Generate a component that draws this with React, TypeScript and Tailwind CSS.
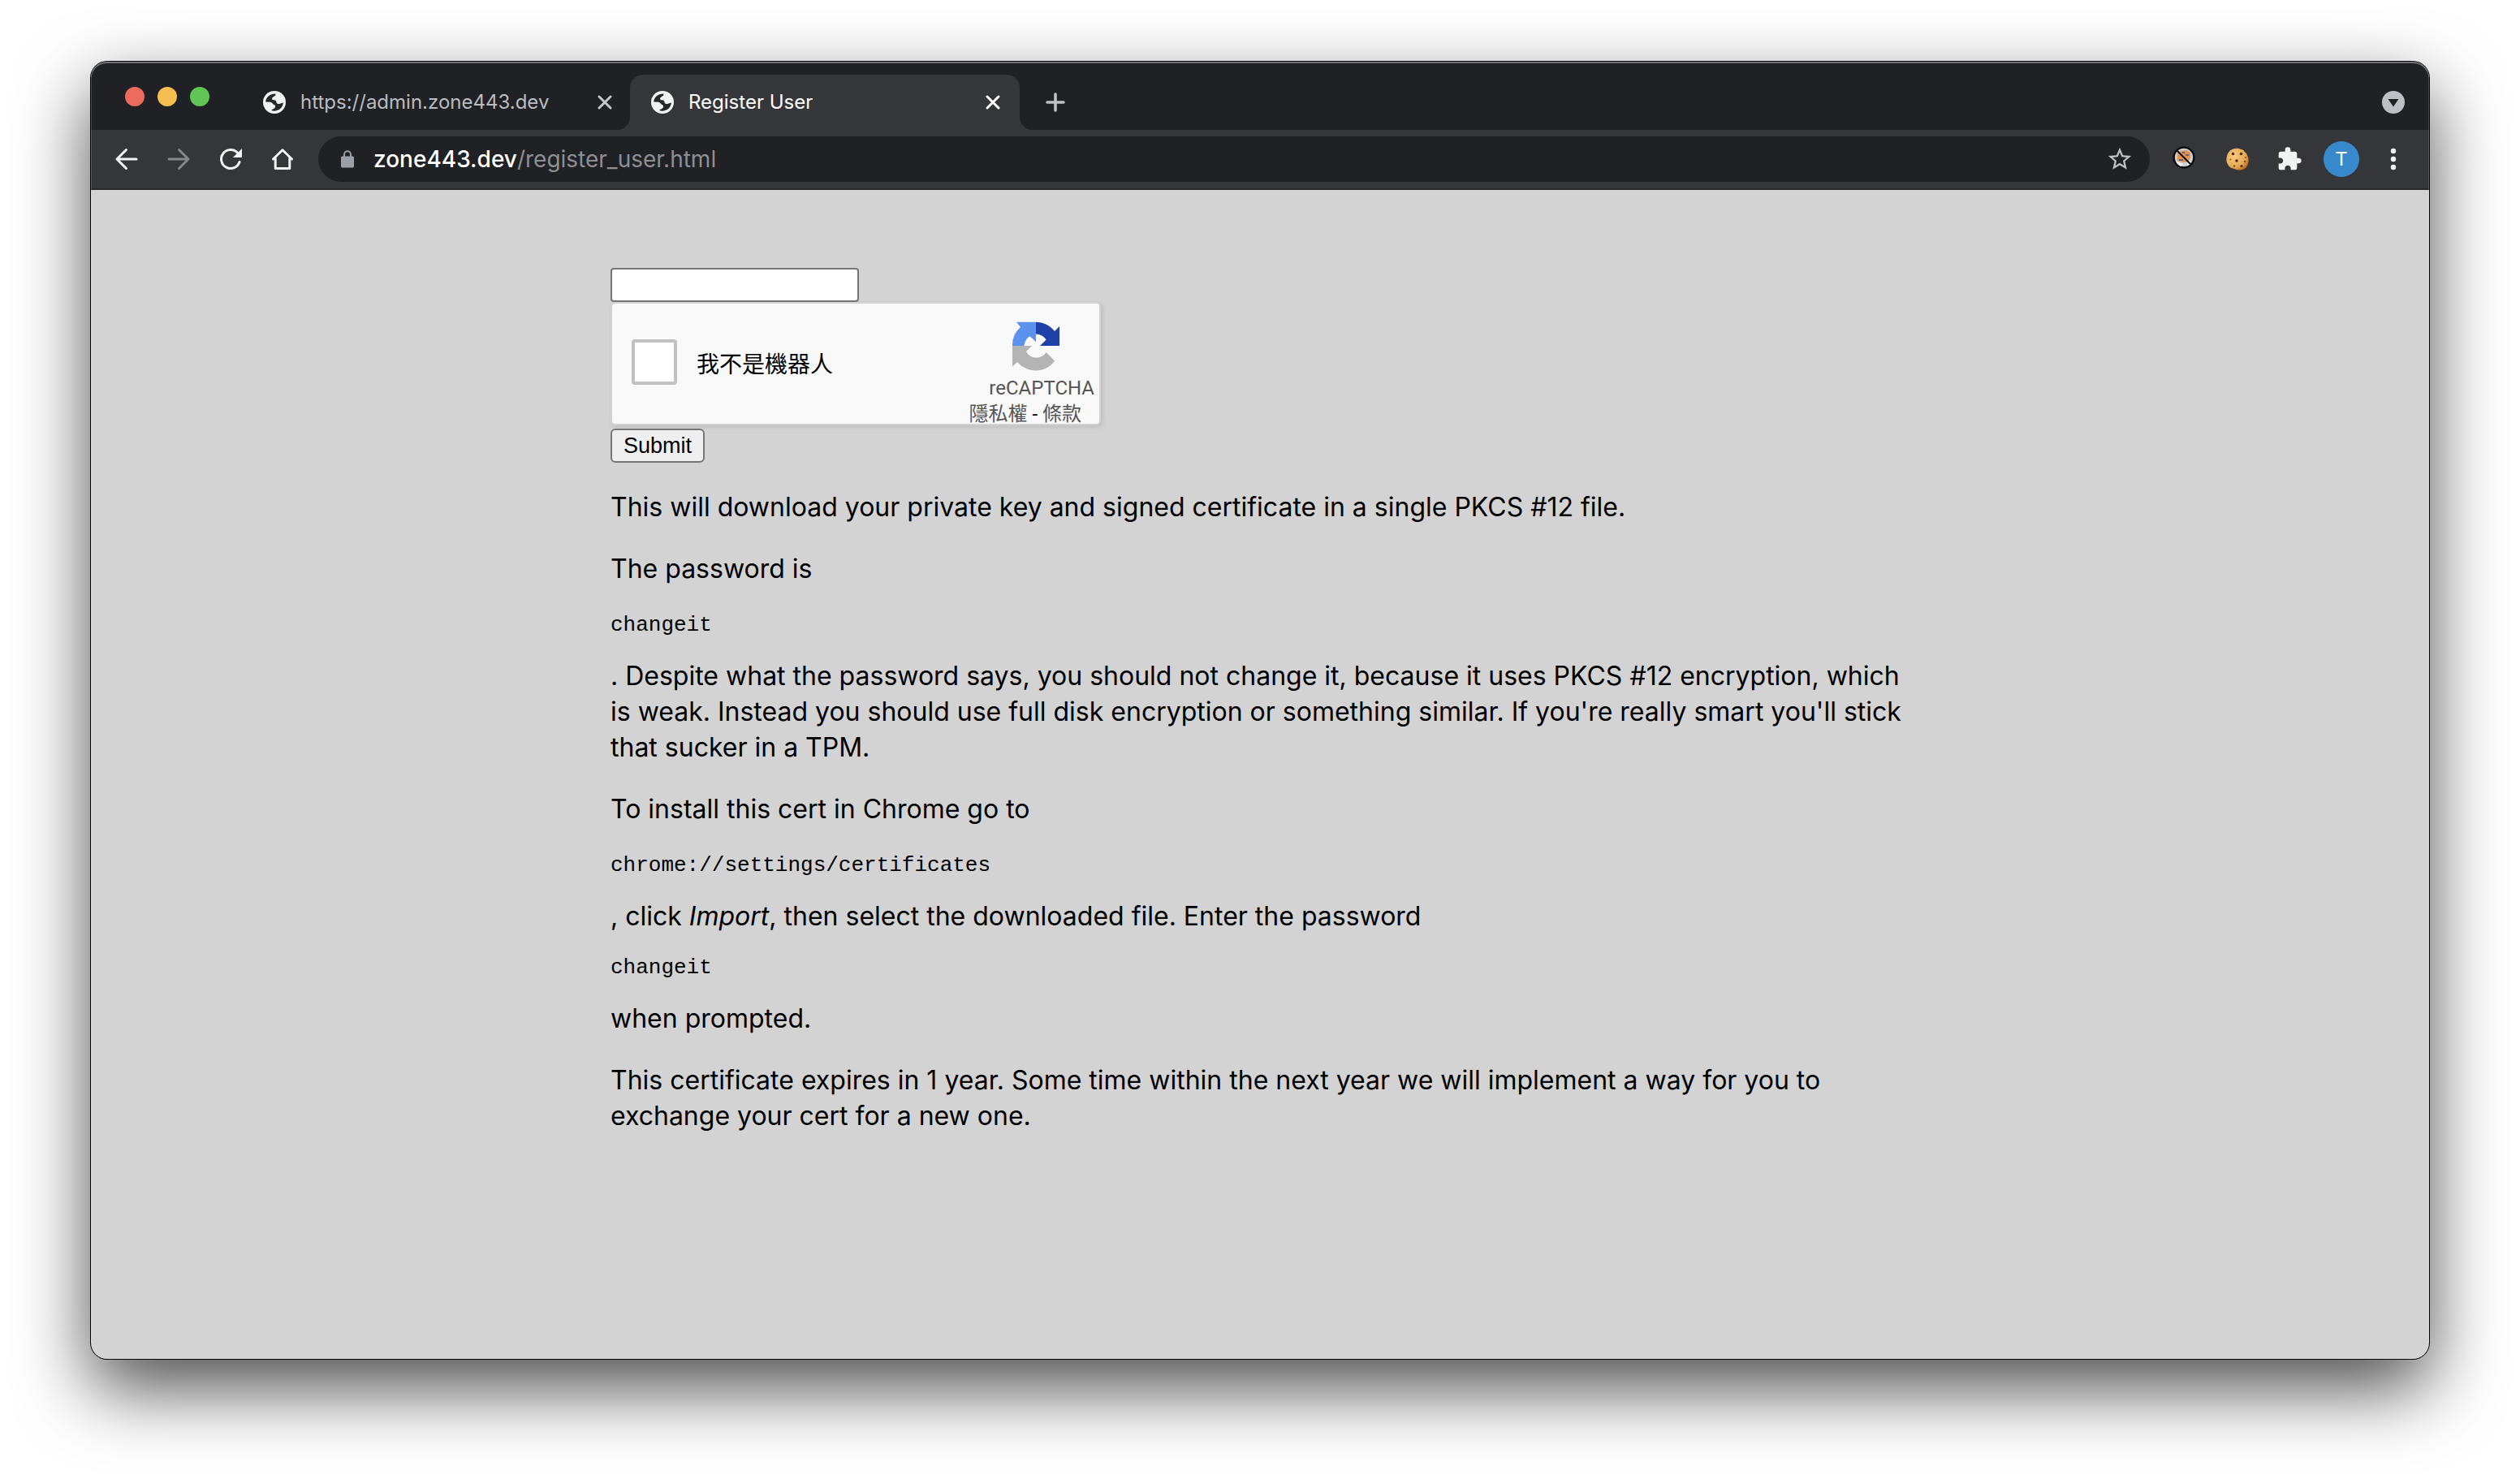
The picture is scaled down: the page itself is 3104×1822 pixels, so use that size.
import type { ReactNode } from "react";
import { MdExtension, MdStarBorder } from "react-icons/md";

function GlobeIcon() {
  return (
    <svg viewBox="0 0 28 28" className="size-7 shrink-0" aria-hidden="true">
      <circle cx="14" cy="14" r="14" fill="#f1f3f4" />
      <path
        d="M3.2 13.6C3.4 7.8 8 3.4 15.4 3.4L15.2 6C13.4 6.2 13.4 7.4 11.6 8.2C10.4 9.2 11.2 11.4 12.8 11.3C14.8 11 16 11.8 16.4 13.4C16.8 15.4 18.2 16.4 20.4 16C22 15.8 22.8 14.6 24.9 14.6C24.4 20.4 20 24.8 13 24.7L10.4 24C10.6 22.4 13.6 22.6 14.6 20.8C15.6 18.8 15.2 17.6 13.4 17C11.6 16.4 11.6 14.4 9.4 13.8Z"
        fill="#27282b"
      />
    </svg>
  );
}

function CloseIcon({ color }: { color: string }) {
  return (
    <svg viewBox="0 0 18 18" className="size-[18px]" fill="none" stroke={color} strokeWidth="3" strokeLinecap="round" aria-hidden="true">
      <path d="M2 2L16 16M16 2L2 16" />
    </svg>
  );
}

function Tab({ title, active = false }: { title: string; active?: boolean }) {
  return (
    <div
      role="tab"
      aria-selected={active}
      className={
        active
          ? "relative flex h-[68px] w-[480px] items-center gap-[18px] rounded-t-2xl bg-[#35363a] pr-6 pl-[26px] text-white"
          : "relative flex h-[68px] w-[480px] items-center gap-[18px] pr-[22px] pl-7 text-[#b9bcc1]"
      }
    >
      {active && (
        <>
          <span className="absolute bottom-0 -left-4 size-4 bg-[radial-gradient(circle_at_0_0,#202124_16px,#35363a_16px)]" />
          <span className="absolute -right-4 bottom-0 size-4 bg-[radial-gradient(circle_at_100%_0,#202124_16px,#35363a_16px)]" />
        </>
      )}
      <GlobeIcon />
      <span className="flex-1 truncate text-[24px] leading-8">{title}</span>
      <button type="button" aria-label={`Close ${title}`}>
        <CloseIcon color={active ? "#ffffff" : "#c4c7cb"} />
      </button>
    </div>
  );
}

function ToolButton({ label, children }: { label: string; children: ReactNode }) {
  return (
    <button type="button" aria-label={label} className="flex h-14 w-16 items-center justify-center">
      {children}
    </button>
  );
}

function ArrowIcon({ color, forward = false }: { color: string; forward?: boolean }) {
  return (
    <svg viewBox="0 0 28 28" className="size-7" fill="none" stroke={color} strokeWidth="3" strokeLinecap="round" strokeLinejoin="round" aria-hidden="true">
      <path d={forward ? "M2 14H25M14.5 2.5L26 14L14.5 25.5" : "M26 14H3M13.5 2.5L2 14L13.5 25.5"} />
    </svg>
  );
}

function BlockerIcon() {
  return (
    <svg viewBox="0 0 28 28" className="mr-1 mb-1 size-7" aria-hidden="true">
      <circle cx="14" cy="14" r="12.4" fill="#c9ccd3" stroke="#0b0b0c" strokeWidth="2.4" />
      <path d="M6 9L10 6L18 5L22 8L22 14L19 19L13 20L6 18Z" fill="#e8924a" />
      <path d="M4 18L8 20L13 22L10 25L6 22Z" fill="#f6f7f9" />
      <path d="M19 19L23 17L21 22L18 24Z" fill="#f6f7f9" />
      <path d="M8 17h5M16 11h4M12 8h3" stroke="#59667e" strokeWidth="2" />
      <path d="M5.5 5.5L22.5 22.5" stroke="#0b0b0c" strokeWidth="2" />
    </svg>
  );
}

function CookieIcon() {
  return (
    <svg viewBox="0 0 28 28" className="size-7" aria-hidden="true">
      <defs>
        <radialGradient id="cookie" cx="0.35" cy="0.35" r="0.75">
          <stop offset="0" stopColor="#f5cb7c" />
          <stop offset="0.7" stopColor="#e5a750" />
          <stop offset="1" stopColor="#b5641f" />
        </radialGradient>
      </defs>
      <path
        d="M13 .8C15 .2 17 1.4 19 2C21 2.400 22 4 23.5 5.5C25.5 7 25.8 9 26.8 11C28 13 27.6 16 27.4 18C27.2 20 26.6 22 25 24C23 26.5 21 27 18 27.4C15.5 27.6 13 27.2 11.5 26.5C9 26 7.5 25 5.5 24.5C3.5 23 2.2 21 1 18.5C.2 16 .2 13.5 .8 11C1.4 8 3 5.5 5 3.6C7.5 1.6 10 .9 13 .8Z"
        fill="url(#cookie)"
      />
      <g fill="#5b2c10">
        <circle cx="8.5" cy="7.5" r="1.8" />
        <circle cx="18.5" cy="7.5" r="1.8" />
        <circle cx="13" cy="16" r="1.8" />
        <circle cx="19" cy="22.5" r="1.5" />
        <g opacity="0.7">
          <circle cx="5.5" cy="14.5" r="1" />
          <circle cx="23" cy="17" r="1.3" />
          <circle cx="10" cy="22.5" r="1.2" />
          <circle cx="24" cy="12" r="1" />
        </g>
      </g>
    </svg>
  );
}

function RecaptchaLogo() {
  return (
    <svg viewBox="0 0 60 62" className="h-[62px] w-[60px]" aria-hidden="true">
      <path d="M30 .8H6L11 7A29.5 29.5 0 0 0 1 30H15.5C16 25 18.5 20.5 22.5 18.2L30 25.2Z" fill="#5a92ee" />
      <path d="M30 .8C39 .8 47.5 5 53 12L59 6V30H35L42.6 22.6C40 18.4 35.5 15.6 30 15.5Z" fill="#1f41a8" />
      <path d="M1 30H25L18 37C20.5 42 25 44.6 30 44.6C35.5 44.6 40 42.5 42.6 38L53 48.4C47.5 56.5 39 60.4 30 60.4C21 60.4 13 56.5 7 50L1 55.5Z" fill="#b4b4b5" />
    </svg>
  );
}

function Code({ children }: { children: ReactNode }) {
  return <pre className="font-['Liberation_Mono',monospace] text-[26px] leading-[30px]">{children}</pre>;
}

export default function App() {
  return (
    <div className="flex min-h-screen flex-col bg-white px-28 pt-19 pb-37 font-['Inter','Noto_Sans_CJK_TC',sans-serif]">
      <div className="relative flex flex-1 flex-col overflow-hidden rounded-[20px] bg-[#d3d3d3] shadow-[0_0_0_1px_#000,0_36px_90px_rgba(0,0,0,0.7)]">
        <header>
          <div className="flex h-21 items-end bg-[#202124] pl-[42px]">
            <div className="mr-[38px] flex h-[66px] gap-4 pt-[13px]">
              <button type="button" aria-label="Close window" className="size-6 rounded-full bg-[#ed6a5f]" />
              <button type="button" aria-label="Minimize window" className="size-6 rounded-full bg-[#f6be50]" />
              <button type="button" aria-label="Zoom window" className="size-6 rounded-full bg-[#61c555]" />
            </div>
            <div role="tablist" className="flex">
              <Tab title="https://admin.zone443.dev" />
              <Tab title="Register User" active />
            </div>
            <button type="button" aria-label="New tab" className="ml-8 flex h-[68px] items-center">
              <svg viewBox="0 0 24 24" className="size-6" stroke="#bdc1c6" strokeWidth="3.6" strokeLinecap="round" aria-hidden="true">
                <path d="M12 2V22M2 12H22" />
              </svg>
            </button>
            <button type="button" aria-label="Search tabs" className="mr-[30px] ml-auto flex h-[68px] items-center">
              <svg viewBox="0 0 28 28" className="size-7" aria-hidden="true">
                <circle cx="14" cy="14" r="14" fill="#bdc1c6" />
                <path d="M7.5 10H20.5L14 19.5Z" fill="#202124" />
              </svg>
            </button>
          </div>
          <div className="flex h-[74px] items-center border-b-2 border-[#29292c] bg-[#35363a] px-3">
            <ToolButton label="Back">
              <ArrowIcon color="#f1f3f4" />
            </ToolButton>
            <ToolButton label="Forward">
              <ArrowIcon color="#86878a" forward />
            </ToolButton>
            <ToolButton label="Reload">
              <svg viewBox="0 0 28 28" className="size-7" aria-hidden="true">
                <path d="M22.5 6.2A11.5 11.5 0 1 0 25 17.5" fill="none" stroke="#f1f3f4" strokeWidth="3" strokeLinecap="round" />
                <path d="M28 1V12H17Z" fill="#f1f3f4" />
              </svg>
            </ToolButton>
            <ToolButton label="Home">
              <svg viewBox="0 0 28 28" className="size-7" fill="none" stroke="#f1f3f4" strokeWidth="3" strokeLinecap="round" strokeLinejoin="round" aria-hidden="true">
                <path d="M2.5 14L14 2.8L25.5 14M5.2 12.5V25.5H22.8V12.5" />
              </svg>
            </ToolButton>
            <div className="mx-3 flex h-14 flex-1 items-center rounded-full bg-[#202124] pr-5 pl-7">
              <svg viewBox="0 0 16 22" className="mr-6 h-[22px] w-4" aria-hidden="true">
                <rect y="7.5" width="16" height="14" rx="1.5" fill="#9aa0a6" />
                <path d="M4 8.5V5.2A4 4 0 0 1 12 5.2V8.5" fill="none" stroke="#9aa0a6" strokeWidth="2" />
              </svg>
              <div role="textbox" aria-label="Address" tabIndex={0} className="flex-1 text-[28px] leading-9 text-[#8d8f93]">
                <span className="font-medium text-white">zone443.dev</span>/register_user.html
              </div>
              <button type="button" aria-label="Bookmark this page">
                <MdStarBorder className="size-[34px] text-[#bdc1c6]" />
              </button>
            </div>
            <ToolButton label="Script blocker">
              <BlockerIcon />
            </ToolButton>
            <ToolButton label="Cookie editor">
              <CookieIcon />
            </ToolButton>
            <ToolButton label="Extensions">
              <MdExtension className="size-8 text-[#f1f3f4]" />
            </ToolButton>
            <ToolButton label="Profile">
              <span className="flex size-11 items-center justify-center rounded-full bg-[#3888cc] font-['Roboto',sans-serif] text-[24px] leading-8 text-white">
                T
              </span>
            </ToolButton>
            <ToolButton label="Menu">
              <svg viewBox="0 0 8 28" className="h-7 w-2" fill="#f1f3f4" aria-hidden="true">
                <circle cx="4" cy="4" r="3.2" />
                <circle cx="4" cy="14" r="3.2" />
                <circle cx="4" cy="24" r="3.2" />
              </svg>
            </ToolButton>
          </div>
        </header>

        <main className="mx-auto w-full max-w-[1600px] flex-1 pt-24 text-[32px] leading-[44px] text-black">
          <form onSubmit={(e) => e.preventDefault()} className="flex flex-col items-start">
            <input
              type="text"
              aria-label="User name"
              className="h-[42px] w-[306px] rounded-[4px] border-2 border-[#767676] bg-white px-1 font-['Liberation_Sans',sans-serif] text-[26px]"
            />
            <div className="mb-1 flex h-[152px] w-[604px] items-center rounded-[6px] border-2 border-[#d3d3d3] bg-[#f9f9f9] pl-6 font-['Roboto','Noto_Sans_CJK_TC',sans-serif] shadow-[2px_2px_4px_1px_rgba(0,0,0,0.08)]">
              <input
                id="robot"
                type="checkbox"
                className="mb-1 size-14 appearance-none rounded-[4px] border-4 border-[#c1c1c1] bg-white"
              />
              <label htmlFor="robot" className="mt-1 ml-6 text-[28px] leading-9">
                我不是機器人
              </label>
              <div className="ml-auto flex h-full flex-col items-end pt-[22px] text-[24px] leading-7 text-[#555555]">
                <div className="mr-12">
                  <RecaptchaLogo />
                </div>
                <div className="mt-1.5 mr-1.5">reCAPTCHA</div>
                <div className="mt-1 mr-[22px] text-black">
                  <a href="#privacy" className="text-[#555555]">隱私權</a> - <a href="#terms" className="text-[#555555]">條款</a>
                </div>
              </div>
            </div>
            <button
              type="submit"
              className="h-[42px] rounded-[6px] border-2 border-[#767676] bg-[#efefef] px-3.5 font-['Liberation_Sans',sans-serif] text-[27px] leading-8"
            >
              Submit
            </button>
          </form>

          <p className="mt-[33px]">This will download your private key and signed certificate in a single PKCS #12 file.</p>
          <section className="mt-8 flex flex-col gap-[26px]">
            <p className="mb-1.5">The password is</p>
            <Code>changeit</Code>
            <p>
              . Despite what the password says, you should not change it, because it uses PKCS #12 encryption, which is
              weak. Instead you should use full disk encryption or something similar. If you're really smart you'll
              stick that sucker in a TPM.
            </p>
          </section>
          <section className="mt-8 flex flex-col gap-[26px]">
            <p className="mb-1.5">To install this cert in Chrome go to</p>
            <Code>chrome://settings/certificates</Code>
            <p>
              , click <em>Import</em>, then select the downloaded file. Enter the password
            </p>
            <Code>changeit</Code>
            <p>when prompted.</p>
          </section>
          <p className="mt-8">
            This certificate expires in 1 year. Some time within the next year we will implement a way for you to
            exchange your cert for a new one.
          </p>
        </main>

        <div className="pointer-events-none absolute inset-0 rounded-[20px] shadow-[inset_0_0_0_1px_rgba(255,255,255,0.18),inset_0_2px_0_rgba(255,255,255,0.3)]" />
      </div>
    </div>
  );
}
